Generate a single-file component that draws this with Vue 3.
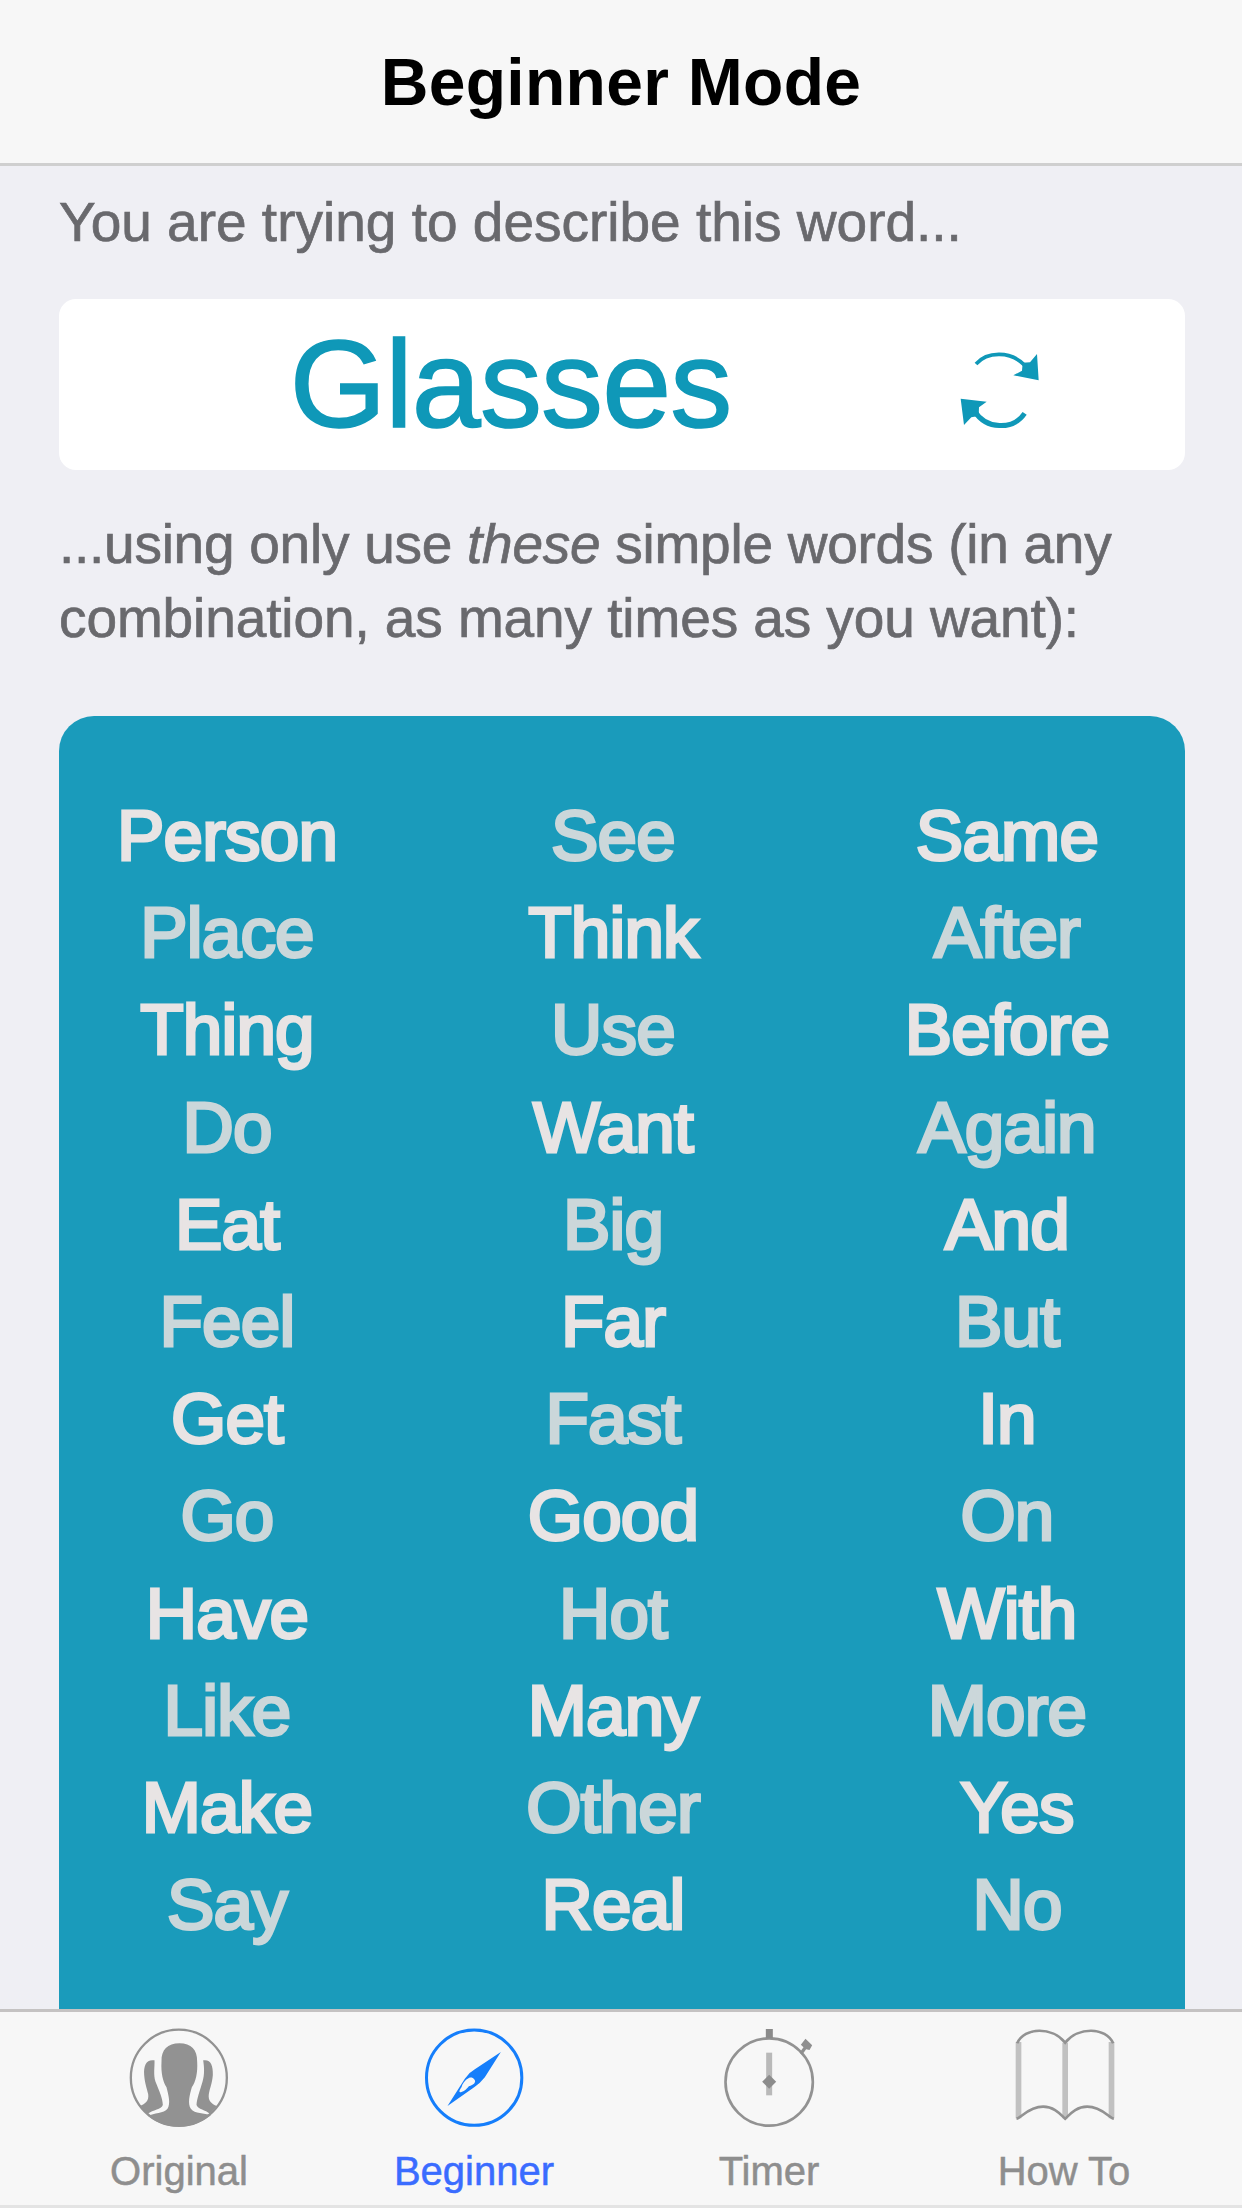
<script setup>
const rows = [
  ['Person', 'See', 'Same'],
  ['Place', 'Think', 'After'],
  ['Thing', 'Use', 'Before'],
  ['Do', 'Want', 'Again'],
  ['Eat', 'Big', 'And'],
  ['Feel', 'Far', 'But'],
  ['Get', 'Fast', 'In'],
  ['Go', 'Good', 'On'],
  ['Have', 'Hot', 'With'],
  ['Like', 'Many', 'More'],
  ['Make', 'Other', 'Yes'],
  ['Say', 'Real', 'No'],
]
const isDim = (r, c) => (r + c) % 2 === 1
const isShifted = (w) => w === 'Yes' || w === 'No'
</script>

<template>
  <div class="screen">
    <header class="navbar"><h1>Beginner Mode</h1></header>

    <main class="content">
      <p class="intro first">You are trying to describe this word...</p>

      <section class="target">
        <span class="target-word">Glasses</span>
        <svg class="refresh" viewBox="0 0 420 360">
          <g fill="none" stroke="#0f98b8">
            <path d="M138 102C170 66 240 60 284 106" stroke-width="11" />
            <path d="M134 244C168 298 248 302 284 250" stroke-width="15" />
          </g>
          <path d="M321 72L326 151L250 136L276 122L278 98L300 97Z" fill="#0f98b8" />
          <path d="M92 206L170 215L147 232L146 258L124 262L102 285Z" fill="#0f98b8" />
        </svg>
      </section>

      <p class="intro second"><span class="l1">...using only use <em>these</em> simple words (in any</span><br /><span class="l2">combination, as many times as you want):</span></p>

      <section class="words">
        <div v-for="(row, r) in rows" :key="r" class="row">
          <span
            v-for="(w, c) in row"
            :key="w"
            class="word"
            :class="{ dim: isDim(r, c), shifted: isShifted(w) }"
          >{{ w }}</span>
        </div>
      </section>
    </main>

    <nav class="tabbar">
      <a class="tab">
        <svg viewBox="-1.5 36 480 354">
          <circle cx="238" cy="233" r="144" fill="none" stroke="#929292" stroke-width="7" />
          <path d="M240 130C204 130 185 149 186 185C184 218 190 244 201 262C207 285 214 312 204 326C194 340 162 338 146 348Q188 381 238 381Q288 381 334 346C314 338 286 342 274 326C264 312 270 285 277 262C289 244 295 218 293 185C294 149 275 130 240 130Z" fill="#929292" />
          <path d="M165 181C141 177 132 195 134 225C136 250 142 265 146 282C149 302 138 312 120 318L145 341C160 330 186 328 190 315C190 295 178 270 168 245C161 225 166 200 165 181Z" fill="#929292" />
          <path d="M311 181C333 177 341 195 340 225C338 250 331 265 328 282C325 302 336 312 352 318L331 341C318 330 296 328 291 315C292 295 302 270 309 245C316 225 314 200 311 181Z" fill="#929292" />
        </svg>
        <span>Original</span>
      </a>
      <a class="tab active">
        <svg viewBox="43.5 36 480 354">
          <circle cx="284" cy="233" r="143" fill="none" stroke="#157efb" stroke-width="9" />
          <path fill-rule="evenodd" d="M364 156L316 232Q302 250 284 262L204 318L256 236Q268 218 286 208ZM268 234C256 240 248 252 246 262C240 270 236 280 246 276C256 274 264 264 268 259C282 256 292 246 284 238C280 232 274 232 268 234Z" fill="#157efb" />
        </svg>
        <span>Beginner</span>
      </a>
      <a class="tab">
        <svg viewBox="-1.5 36 480 354">
          <circle cx="239" cy="246" r="131" fill="none" stroke="#929292" stroke-width="8" />
          <rect x="229" y="87" width="21" height="28" fill="#8a8a8a" />
          <path d="M330 158L342 142L334 134L348 116L368 136L360 150L350 148L338 164Z" fill="#8f8f8f" />
          <path d="M239 158V286" stroke="#b9b9b9" stroke-width="18" />
          <path d="M239 224L260 245L239 266L218 245Z" fill="#8c8c8c" />
        </svg>
        <span>Timer</span>
      </a>
      <a class="tab">
        <svg viewBox="12.5 36 480 354" fill="none">
          <path d="M116 126V355M256 128V355M395 126V355" stroke="#c1c1c1" stroke-width="17" />
          <path d="M112 130C134 80 218 80 256 128C294 80 378 80 400 130M110 356C124 354 146 320 190 320C226 320 244 346 256 356C268 346 286 320 322 320C366 320 388 354 402 356" stroke="#929292" stroke-width="8" />
        </svg>
        <span>How To</span>
      </a>
    </nav>
  </div>
</template>

<style>
body {
  margin: 0;
}
</style>

<style scoped>
.screen {
  width: 1242px;
  height: 2208px;
  display: flex;
  flex-direction: column;
  overflow: hidden;
  background: #efeff4;
  font-family: 'Liberation Sans', Arial, sans-serif;
}
.navbar {
  flex: none;
  height: 163px;
  background: #f7f7f7;
  border-bottom: 3px solid #cfcfcf;
  text-align: center;
}
h1 {
  margin: 0;
  font-size: 66px;
  line-height: 164px;
  height: 163px;
  letter-spacing: 0.3px;
  font-weight: 700;
  color: #000;
}
.content {
  flex: 1;
  min-height: 0;
  overflow: hidden;
  padding: 19px 57px 0 59px;
}
.intro {
  margin: 0;
  font-size: 55px;
  line-height: 74px;
  color: #69696d;
  -webkit-text-stroke: 0.7px #69696d;
  white-space: nowrap;
}
.second {
  margin-top: 37px;
}
.l1 {
  letter-spacing: -0.26px;
}
.l2 {
  letter-spacing: -0.1px;
}
.target {
  display: flex;
  align-items: flex-start;
  height: 171px;
  margin-top: 40px;
  background: #fff;
  border-radius: 17px;
}
.target-word {
  flex: none;
  box-sizing: border-box;
  width: 871px;
  padding-left: 32px;
  text-align: center;
  font-size: 124px;
  line-height: 171px;
  letter-spacing: -0.9px;
  color: #0f98b8;
  -webkit-text-stroke: 1.6px #0f98b8;
}
.refresh {
  width: 140px;
  height: 120px;
  margin-top: 31px;
}
.words {
  margin-top: 61px;
  padding-top: 71px;
  height: 1300px;
  background: #1a9bbb;
  border-radius: 35px;
}
.row {
  display: grid;
  grid-template-columns: 336px 436px 352px;
  height: 97.2px;
}
.word {
  text-align: center;
  font-size: 71px;
  line-height: 97.2px;
  letter-spacing: -0.8px;
  color: #e8e4e4;
  -webkit-text-stroke: 3px #e8e4e4;
}
.dim {
  color: #cbd7da;
  -webkit-text-stroke-color: #cbd7da;
}
.shifted {
  padding-left: 20px;
}
.tabbar {
  flex: none;
  box-sizing: border-box;
  height: 199px;
  display: flex;
  padding: 0 31px;
  background: #f7f7f7;
  border-top: 3px solid #c4c2c2;
  border-bottom: 3px solid #e4e4e4;
}
.tab {
  flex: 1;
  display: flex;
  flex-direction: column;
  align-items: center;
  color: #8e8e8e;
}
.tab svg {
  flex: none;
  width: 160px;
  height: 118px;
}
.tab span {
  margin-top: 6px;
  padding-left: 1px;
  font-size: 40px;
  line-height: 70px;
  height: 60px;
  -webkit-text-stroke: 0.5px currentColor;
}
.active {
  color: #3a6cff;
}
</style>
